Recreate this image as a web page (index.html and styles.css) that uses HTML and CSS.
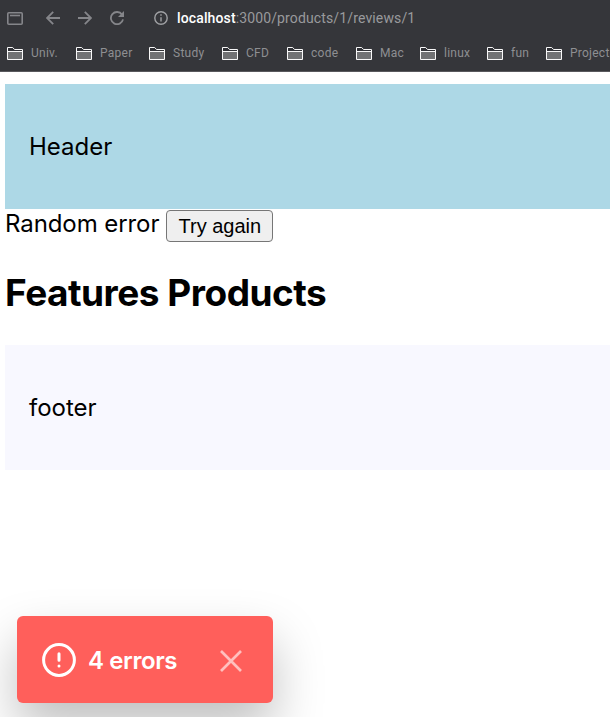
FILE: index.html
```html
<!DOCTYPE html>
<html lang="en">
<head>
<meta charset="utf-8">
<title>localhost:3000/products/1/reviews/1</title>
<link rel="stylesheet" href="styles.css">
</head>
<body>
<svg class="defs" aria-hidden="true">
  <symbol id="folder" viewBox="0 0 16 13">
    <path d="M.5.5h5.2l1.8 2h8v10H.5z" fill="#303136" stroke="#f8f8f8"/>
    <path d="M1 5h14v7H1z" fill="#717274"/>
    <path d="M1 4.5h14" stroke="#f8f8f8"/>
  </symbol>
</svg>
<div class="browser">
  <div class="toolbar">
    <svg class="nav-icon window" viewBox="0 0 16 13"><rect x=".8" y=".8" width="14.4" height="11.4" rx="1" /><path d="M3 3.5h10"/></svg>
    <svg class="nav-icon back" viewBox="0 0 14 14"><path d="M14 7H1.2M7.2.8L1 7l6.2 6.2"/></svg>
    <svg class="nav-icon forward" viewBox="0 0 14 14"><path d="M0 7h12.8M6.8.8L13 7l-6.2 6.2"/></svg>
    <svg class="nav-icon reload" viewBox="0 0 14 14"><path d="M12 3.6A6.1 6.1 0 1 0 13 8.3"/><path class="solid" d="M14 0v6H8z"/></svg>
    <svg class="nav-icon info" viewBox="0 0 14 14"><circle cx="7" cy="7" r="6.2"/><path d="M7 6.2v4.3M7 3.3v1.5"/></svg>
    <span class="url"><b>localhost</b>:3000/products/1/reviews/1</span>
  </div>
  <nav class="bookmarks">
    <span class="bookmark"><svg><use href="#folder"/></svg>Univ.</span>
    <span class="bookmark"><svg><use href="#folder"/></svg>Paper</span>
    <span class="bookmark"><svg><use href="#folder"/></svg>Study</span>
    <span class="bookmark"><svg><use href="#folder"/></svg>CFD</span>
    <span class="bookmark"><svg><use href="#folder"/></svg>code</span>
    <span class="bookmark"><svg><use href="#folder"/></svg>Mac</span>
    <span class="bookmark"><svg><use href="#folder"/></svg>linux</span>
    <span class="bookmark"><svg><use href="#folder"/></svg>fun</span>
    <span class="bookmark"><svg><use href="#folder"/></svg>Project</span>
  </nav>
</div>
<div class="page">
  <header class="header">Header</header>
  <div class="error"><span>Random error</span><button class="retry">Try again</button></div>
  <h1 class="title">Features Products</h1>
  <footer class="footer">footer</footer>
</div>
<div class="toast">
  <svg class="alert" viewBox="0 0 34 34"><circle cx="17" cy="17" r="15.4"/><path d="M17 10.8v6.4M17 23v.1"/></svg>
  <span class="count">4 errors</span>
  <svg class="close" viewBox="0 0 22 22"><path d="M1 1l20 20M21 1L1 21"/></svg>
</div>
</body>
</html>
```
FILE: styles.css
```css
* { box-sizing: border-box; }
html, body { height: 717px; overflow: hidden; }
body { margin: 0; background: #fff; color: #000; font-family: Inter, sans-serif; font-size: 24px; }
svg { display: block; flex: none; }
.defs { position: absolute; width: 0; height: 0; }

.browser { height: 72px; background: #35363a; border-bottom: 1px solid #59595d; overflow: hidden; }
.toolbar { display: flex; align-items: center; height: 36px; padding-left: 7px; }
.nav-icon { width: 14px; height: 14px; fill: none; stroke: #85868a; stroke-width: 1.8; }
.nav-icon .solid { fill: #85868a; stroke: none; }
.window { width: 16px; height: 13px; margin-right: 23px; stroke-width: 1.6; }
.back { margin-right: 18px; }
.forward { margin-right: 18px; }
.reload { margin-right: 30px; }
.info { stroke: #a0a1a4; stroke-width: 1.4; margin-right: 9px; }
.url { font: 14px/20px Roboto, sans-serif; letter-spacing: .13px; color: #999a9d; white-space: nowrap; }
.url b { font-weight: 500; color: #fff; }

.bookmarks { display: grid; grid-template-columns: 69px 73px 73px 65px 69px 64px 67px 59px 70px; height: 34px; padding-left: 7px; }
.bookmark { display: flex; align-items: center; gap: 8px; font: 12px/16px Roboto, sans-serif; letter-spacing: .25px; color: #8e8f92; white-space: nowrap; }
.bookmark svg { width: 16px; height: 13px; }

.page { padding: 12px 0 0 5px; }
.header, .footer { display: flex; align-items: center; height: 125px; padding-left: 24px; }
.header { background: #add8e6; }
.footer { background: #f8f8ff; }
.error { display: flex; height: 34px; line-height: 30px; letter-spacing: -.08px; }
.retry { width: 107px; height: 32px; margin: 1px 0 0 7px; padding: 0; border: 1px solid #767676; border-radius: 4px; background: #efefef; color: #000; font: 20px/28px "Liberation Sans", sans-serif; }
.title { margin: 25px 0 28px; font-size: 37px; line-height: 49px; font-weight: 700; letter-spacing: -.5px; white-space: nowrap; }

.toast { position: absolute; left: 17px; top: 616px; display: flex; align-items: center; width: 256px; height: 87px; padding: 1px 31px 0 25px; border-radius: 6px; background: #ff5f5b; color: #fff; box-shadow: 0 25px 50px rgba(0, 0, 0, .25); }
.alert { width: 34px; height: 34px; fill: none; stroke: #fff; stroke-width: 3; stroke-linecap: round; }
.count { margin-left: 12px; padding-top: 1px; font-size: 24px; font-weight: 600; letter-spacing: -.4px; white-space: nowrap; }
.close { width: 22px; height: 22px; margin: 1px 0 0 auto; stroke: #ffc0be; stroke-width: 2.7; }
```
